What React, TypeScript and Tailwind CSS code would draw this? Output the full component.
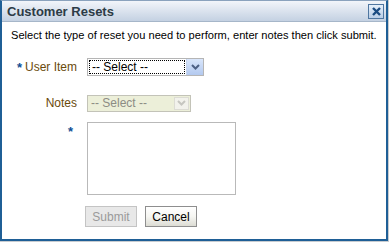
import React from "react";

const font = { fontFamily: '"Liberation Sans", Arial, sans-serif' };

const Chevron = ({ color }: { color: string }) => (
  <svg width="9" height="6" viewBox="0 0 9 6">
    <path d="M1 1 L4.5 4.5 L8 1" fill="none" stroke={color} strokeWidth="2" />
  </svg>
);

const App = () => {
  return (
    <div className="w-[389px] h-[242px] bg-[#c8ccd0] overflow-hidden" style={font}>
      <div className="w-[388px] h-[241px] bg-white border-x-2 border-b-2 border-t border-[#1f5f96] border-t-[#8aa2bd] flex flex-col">
        <div className="h-[21px] shrink-0 flex items-center justify-between pl-[5px] pr-[2px] bg-gradient-to-b from-[#f2f5fa] to-[#c4d1e2] border-b border-[#a6b6c9]">
          <span className="text-[13px] font-bold text-[#2c3b46] leading-none">Customer Resets</span>
          <div className="w-[16px] h-[15px] border border-[#4f76a0] bg-gradient-to-b from-[#e6f0fb] to-[#b8cde6] flex items-center justify-center">
            <svg width="9" height="9" viewBox="0 0 9 9">
              <path d="M1 1 L8 8 M8 1 L1 8" stroke="#1b4c82" strokeWidth="2.4" />
            </svg>
          </div>
        </div>

        <div className="flex flex-col pl-[9px]">
          <p className="mt-[6px] text-[11.1px] leading-[14px] text-black whitespace-nowrap">
            Select the type of reset you need to perform, enter notes then click submit.
          </p>

          <div className="mt-[16px] flex items-center">
            <div className="w-[66px] flex items-center justify-end text-[12px] text-[#6a4a0c]">
              <span className="text-[#0f4f93] font-bold mr-[3px] text-[13px] leading-none">*</span>
              User Item
            </div>
            <div className="ml-[10px] w-[117px] h-[18px] border border-[#b5b5b5] flex">
              <div className="flex-1 m-[1px] border border-dotted border-black flex items-center pl-[2px] text-[12px] text-black">
                -- Select --
              </div>
              <div className="w-[17px] h-full bg-gradient-to-b from-[#d9e6fb] to-[#b3c9ef] border-l border-[#c3d3ee] flex items-center justify-center">
                <Chevron color="#4d6185" />
              </div>
            </div>
          </div>

          <div className="mt-[18px] flex items-center">
            <div className="w-[66px] text-right text-[12px] text-[#6a4a0c]">Notes</div>
            <div className="ml-[10px] w-[104px] h-[17px] border border-[#c3c3b8] bg-[#ecefd9] flex">
              <div className="flex-1 flex items-center pl-[3px] text-[12px] text-[#8c8c84]">-- Select --</div>
              <div className="w-[15px] m-[1px] bg-[#f2f2ec] border border-[#dcdcd4] flex items-center justify-center">
                <Chevron color="#c6c6c0" />
              </div>
            </div>
          </div>

          <div className="mt-[10px] flex items-start">
            <div className="w-[66px] text-right pr-[4px] text-[#0f4f93] font-bold text-[13px] leading-none mt-[3px]">*</div>
            <div className="ml-[10px] w-[149px] h-[73px] border border-[#b9b9b9] bg-white" />
          </div>

          <div className="mt-[11px] ml-[74px] flex gap-[8px]">
            <div className="w-[52px] h-[21px] border border-[#c4c4c4] bg-[#e8e8e8] flex items-center justify-center text-[12px] text-[#9a9a9a]">
              Submit
            </div>
            <div className="w-[52px] h-[21px] border border-[#8e8e8e] bg-gradient-to-b from-white via-[#f6f6f2] to-[#dcdcd4] flex items-center justify-center text-[12px] text-black">
              Cancel
            </div>
          </div>
        </div>
      </div>
    </div>
  );
};

export default App;
